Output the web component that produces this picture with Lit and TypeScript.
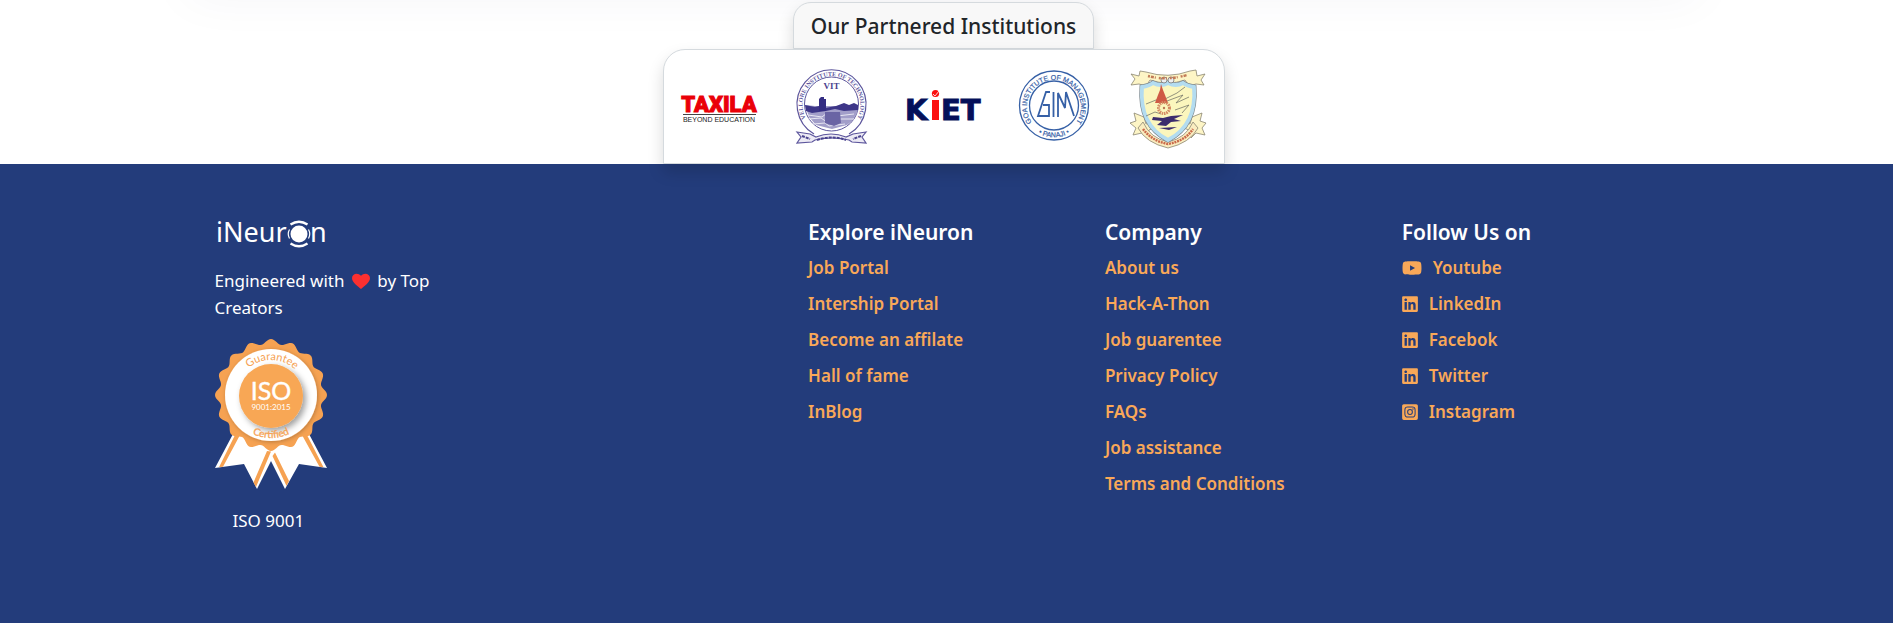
import { LitElement, html, css } from "lit";
import { customElement, property } from "lit/decorators.js";

interface FooterLink {
  label: string;
  icon?: "youtube" | "linkedin" | "instagram";
}

const EXPLORE: FooterLink[] = [
  { label: "Job Portal" },
  { label: "Intership Portal" },
  { label: "Become an affilate" },
  { label: "Hall of fame" },
  { label: "InBlog" },
];

const COMPANY: FooterLink[] = [
  { label: "About us" },
  { label: "Hack-A-Thon" },
  { label: "Job guarentee" },
  { label: "Privacy Policy" },
  { label: "FAQs" },
  { label: "Job assistance" },
  { label: "Terms and Conditions" },
];

const FOLLOW: FooterLink[] = [
  { label: "Youtube", icon: "youtube" },
  { label: "LinkedIn", icon: "linkedin" },
  { label: "Facebok", icon: "linkedin" },
  { label: "Twitter", icon: "linkedin" },
  { label: "Instagram", icon: "instagram" },
];

const icons = {
  youtube: html`<svg width="20" height="18" viewBox="0 0 576 512" aria-hidden="true"><path fill="currentColor" d="M549.655 124.083c-6.281-23.65-24.787-42.276-48.284-48.597C458.781 64 288 64 288 64S117.22 64 74.629 75.486c-23.497 6.322-42.003 24.947-48.284 48.597-11.412 42.867-11.412 132.305-11.412 132.305s0 89.438 11.412 132.305c6.281 23.65 24.787 41.5 48.284 47.821C117.22 448 288 448 288 448s170.78 0 213.371-11.486c23.497-6.321 42.003-24.171 48.284-47.821 11.412-42.867 11.412-132.305 11.412-132.305s0-89.438-11.412-132.305zm-317.51 213.508V175.185l142.739 81.205-142.739 81.201z"/></svg>`,
  linkedin: html`<svg width="16" height="18" viewBox="0 0 448 512" aria-hidden="true"><path fill="currentColor" d="M416 32H31.9C14.3 32 0 46.5 0 64.3v383.4C0 465.5 14.3 480 31.9 480H416c17.6 0 32-14.5 32-32.3V64.3c0-17.8-14.4-32.3-32-32.3zM135.4 416H69V202.2h66.5V416zm-33.2-243c-21.3 0-38.5-17.3-38.5-38.5S80.9 96 102.2 96c21.2 0 38.5 17.3 38.5 38.5 0 21.3-17.2 38.5-38.5 38.5zm282.1 243h-66.4V312c0-24.8-.5-56.7-34.5-56.7-34.6 0-39.9 27-39.9 54.9V416h-66.4V202.2h63.7v29.2h.9c8.9-16.8 30.6-34.5 62.9-34.5 67.2 0 79.7 44.3 79.7 101.9V416z"/></svg>`,
  instagram: html`<svg width="16" height="18" viewBox="0 0 448 512" aria-hidden="true"><path fill="currentColor" d="M224 202.66A53.34 53.34 0 1 0 277.36 256 53.38 53.38 0 0 0 224 202.66zm124.71-41a54 54 0 0 0-30.41-30.41c-21-8.29-71-6.43-94.3-6.43s-73.25-1.93-94.31 6.43a54 54 0 0 0-30.41 30.41c-8.28 21-6.43 71.05-6.43 94.33s-1.85 73.27 6.47 94.34a54 54 0 0 0 30.41 30.41c21 8.29 71 6.43 94.31 6.43s73.24 1.93 94.3-6.43a54 54 0 0 0 30.41-30.41c8.35-21 6.43-71.05 6.43-94.33s1.92-73.26-6.43-94.33zM224 338a82 82 0 1 1 82-82 81.9 81.9 0 0 1-82 82zm85.38-148.3a19.14 19.14 0 1 1 19.13-19.14 19.1 19.1 0 0 1-19.09 19.18zM400 32H48A48 48 0 0 0 0 80v352a48 48 0 0 0 48 48h352a48 48 0 0 0 48-48V80a48 48 0 0 0-48-48zm-17.12 290c-1.29 25.63-7.14 48.34-25.85 67s-41.4 24.63-67 25.85c-26.41 1.49-105.59 1.49-132 0-25.63-1.29-48.26-7.15-67-25.85s-24.63-41.42-25.85-67c-1.49-26.42-1.49-105.61 0-132 1.29-25.63 7.07-48.34 25.85-67s41.47-24.56 67-25.78c26.41-1.49 105.59-1.49 132 0 25.63 1.29 48.33 7.15 67 25.85s24.63 41.42 25.85 67.05c1.49 26.32 1.49 105.44 0 131.88z"/></svg>`,
};

/* Outer edge of the rosette: a ring of rounded scallops. */
function rosette(cx: number, cy: number, r: number, depth: number, lobes: number): string {
  const points: string[] = [];
  for (let i = 0; i < 360; i += 1.5) {
    const a = (i * Math.PI) / 180;
    const wave = (1 + Math.cos(a * lobes)) / 2;
    const rad = r - depth + depth * wave;
    points.push(`${(cx + rad * Math.sin(a)).toFixed(2)} ${(cy - rad * Math.cos(a)).toFixed(2)}`);
  }
  return `M${points.join("L")}Z`;
}

@customElement("partner-logos")
class PartnerLogos extends LitElement {
  static styles = css`
    :host { display: block; }
    .row { display: grid; grid-template-columns: repeat(5, minmax(0, 112px)); justify-items: center; }
    svg { display: block; overflow: visible; }
    text { font-family: "Liberation Sans", Arial, sans-serif; }
    .bold { font-family: "Roboto", sans-serif; font-weight: 900; }
    .heavy { font-family: "DejaVu Sans", sans-serif; font-weight: 700; }
    .serif { font-family: "Liberation Serif", serif; font-weight: 700; }
  `;
  render() {
    return html`<div class="row">
      <svg width="76" height="80" viewBox="0 0 76 80" role="img" aria-label="Taxila">
        <text class="bold" x="37" y="45" text-anchor="middle" font-size="22" fill="#ea0008" stroke="#ea0008" stroke-width="1">TAXILA</text>
        <path d="M1 47.5H74" stroke="#444" stroke-width="1"/>
        <text x="37" y="55" text-anchor="middle" font-size="7" fill="#222">BEYOND EDUCATION</text>
      </svg>
      <svg width="72" height="80" viewBox="0 0 72 80" role="img" aria-label="Vellore Institute of Technology">
        <defs><path id="vit" d="M14 57.500A29 29 0 1 1 57 57.500"/></defs>
        <g fill="none" stroke="#5c559c">
          <path d="M18 67A34.500 34.500 0 1 1 53 67" stroke-width="1.200"/>
          <circle cx="35.500" cy="37" r="27" stroke-width="1"/>
        </g>
        <text class="serif" font-size="6" fill="#5c559c"><textPath href="#vit" startOffset="50%" text-anchor="middle">VELLORE INSTITUTE OF TECHNOLOGY</textPath></text>
        <text class="serif" x="35.500" y="22" text-anchor="middle" font-size="9" fill="#4a438f">VIT</text>
        <path d="M9 38l10 1h36l7-1-1 8-5 8-5 4-15 4-16-4-7-8z" fill="#a29ec9"/>
        <path d="M9 38l10 2 4-1 6 2 11-2 8-3 5 2 5-2 4 2v5l-14 1-9-2-9 2-14 2-6-2z" fill="#3d3688"/>
        <path d="M23 41V32l2-2h3v2h2v12h-7z" fill="#342d83"/>
        <path d="M12 48l14 2 5-4 10 3 17-2M12 52l13-1 6 4 14-3 13 0M17 57l12-1 4 3 16-2" fill="none" stroke="#e7e6f2" stroke-width="1"/>
        <path d="M29 45h15l1 11-7 3-9-3z" fill="#6a64a4"/>
        <path d="M1 65l13 2 6 3q15-6 30 0l7-3 13-2-4 5 4 6-14-1-3-2q-17-4-34 0l-3 2-15 1 4-6z" fill="#eceaf4" stroke="#5c559c" stroke-width="1.200"/>
        <path d="M21 73q14-5 29 0M6 69l8 3M65 69l-8 3" fill="none" stroke="#4a438f" stroke-width="2" stroke-dasharray="3 1"/>
      </svg>
      <svg width="80" height="80" viewBox="0 0 80 80" role="img" aria-label="KIET">
        <text class="heavy" x="1" y="53" font-size="29" fill="#04105a" stroke="#04105a" stroke-width="1">K</text>
        <path d="M28 33h7v20h-7z" fill="#fb0f0f"/><circle cx="31.500" cy="26.500" r="3.600" fill="#fb0f0f"/>
        <path d="M29 27l2 2 4-5" fill="none" stroke="#fff" stroke-width=".8"/>
        <text class="heavy" x="37" y="53" font-size="29" fill="#04105a" stroke="#04105a" stroke-width="1">ET</text>
      </svg>
      <svg width="72" height="80" viewBox="0 0 72 80" role="img" aria-label="Goa Institute of Management, Panaji">
        <defs><path id="gimTop" d="M14.500 58.500A27 27 0 1 1 53.500 58.500"/><path id="gimBottom" d="M8 57A32 32 0 0 0 60 57"/></defs>
        <g fill="none" stroke="#3660a6"><circle cx="34" cy="38.500" r="34.500" stroke-width="1.300"/><circle cx="34" cy="38.500" r="24.500" stroke-width="1.300"/>
        <path d="M30 25h-4l-8 24h11V38h-6M33.500 25v25M38 50V26l7 15 1-16 8 24" stroke-width="1.800"/></g>
        <text font-size="7" fill="#3660a6" stroke="#3660a6" stroke-width=".2"><textPath href="#gimTop" startOffset="50%" text-anchor="middle">GOA INSTITUTE OF MANAGEMENT</textPath></text>
        <text font-size="7" fill="#3660a6" stroke="#3660a6" stroke-width=".2"><textPath href="#gimBottom" startOffset="50%" text-anchor="middle">• PANAJI •</textPath></text>
      </svg>
      <svg width="74" height="80" viewBox="0 0 74 80" role="img" aria-label="College crest">
        <g stroke="#8b8672" stroke-width=".8" fill="#fdf5c6">
          <path d="M3 46l10 4 2 7 8-3 3 6-8 3-2 8-5-5-9 2 3-7-6-5 6-2zM71 46l-10 4-2 7-6-3-3 6 8 3 2 8 5-5 9 2-3-7 4-5-6-2z"/>
          <path d="M12 55q7 16 25 20 18-4 25-20l5 6q-8 15-30 20-22-5-30-20z" fill="#faedc0"/>
          <path d="M0 7l8 2 1-5 6 1q22 7 44-1l6-1 1 6 8-2-4 6 3 5-8-1-7 2-4-6q-17 6-35 0l-4 6-7-2-8 1 4-6z"/>
        </g>
        <path d="M11 20q7-1 11-4 8 4 15 0 8 4 15 0 4 3 11 4 3 38-26 53Q8 58 11 20z" fill="#fbf6bd" stroke="#7b858a" stroke-width="5"/>
        <path d="M11 20q7-1 11-4 8 4 15 0 8 4 15 0 4 3 11 4 3 38-26 53Q8 58 11 20z" fill="#fbf6bd" stroke="#b3dcf0" stroke-width="3.800"/>
        <circle cx="33" cy="13" r="3" fill="#eee" stroke="#777" stroke-width=".8"/><circle cx="40" cy="13" r="3" fill="#eee" stroke="#777" stroke-width=".8"/>
        <path d="M15 37l10-4 9-1 12-6 8-6M36 34l16-6-7 8 13-6M15 49l9-4 6 2M44 43l14-5-7 8" fill="none" stroke="#77796b" stroke-width=".8"/>
        <path d="M30 17l2 6 2 5 3 8H24l3-8 2-5z" fill="#cf5a44"/>
        <circle cx="33" cy="41" r="5.500" fill="none" stroke="#d48a63" stroke-width="3" stroke-dasharray="1.500 .8"/>
        <circle cx="33" cy="41" r="1.200" fill="#b75"/>
        <path d="M22 50l10 1 8-2 12-1-9 4 7 2-10 1-5 4-9-1 5-4-10-1zM28 61l18-1-8 3z" fill="#3c2c6d"/>
        <path d="M17 9q18 5 39-1" fill="none" stroke="#c27b58" stroke-width="2.500" stroke-dasharray="2 1 3 1 1 3"/>
        <path d="M12 62q9 12 25 15 17-3 25-15" fill="none" stroke="#c96a4a" stroke-width="2.500" stroke-dasharray="2 .8"/>
      </svg>
    </div>`;
  }
}

@customElement("iso-badge")
class IsoBadge extends LitElement {
  static styles = css`
    :host { display: block; }
    svg { display: block; }
    text { font-family: "Lato", sans-serif; text-anchor: middle; }
  `;
  render() {
    return html`<svg width="112" height="151" viewBox="0 0 112 151" role="img" aria-label="ISO 9001:2015 guarantee certified">
      <defs>
        <filter id="soft" x="-30%" y="-30%" width="170%" height="170%"><feDropShadow dx="3" dy="3" stdDeviation="3" flood-color="#000" flood-opacity=".38"/></filter>
        <filter id="faint" x="-30%" y="-30%" width="170%" height="170%"><feDropShadow dx="1" dy="1" stdDeviation="2" flood-color="#000" flood-opacity=".25"/></filter>
        <path id="arcTop" d="M21 56A35 35 0 0 1 91 56"/>
        <path id="arcBottom" d="M13 56A43 43 0 0 0 99 56"/>
      </defs>
      <path d="M18 95L0 129l29-4 13 25 14-28 14 28 14-25 28 4-18-34z" fill="#fff"/>
      <path d="M19.500 97L4 128.300l4-.5L25 96zM92.500 97l16 31.300-4-.5L87 96zM52 112l4 .5-15 35.500-2.500-4.500zM57.500 117l2.500-3.500 14 28.500-2.500 5z" fill="#f6a252"/>
      <path d=${rosette(56, 56, 56, 5, 16)} fill="#f6a252"/>
      <circle cx="56" cy="56" r="46" fill="#fff" filter="url(#faint)"/>
      <circle cx="56" cy="57" r="32" fill="#f8a755" filter="url(#soft)"/>
      <text x="56" y="61" font-size="25" fill="#fff" stroke="#fff" stroke-width=".4">ISO</text>
      <text x="56" y="71" font-size="8" fill="#fff">9001:2015</text>
      <text font-size="11" fill="#f6a252"><textPath href="#arcTop" startOffset="51%">Guarantee</textPath></text>
      <text font-size="10" fill="#f6a252" stroke="#f6a252" stroke-width=".3"><textPath href="#arcBottom" startOffset="50%">Certified</textPath></text>
    </svg>`;
  }
}

@customElement("footer-links")
class FooterLinks extends LitElement {
  @property() heading = "";
  @property({ attribute: false }) links: FooterLink[] = [];
  static styles = css`
    :host { display: block; }
    h4 { margin: 0 0 8px; font-size: 21px; line-height: 28px; font-weight: 600; color: #fff; }
    ul { display: grid; gap: 8px; justify-items: start; list-style: none; margin: 0; padding: 0; }
    a { display: flex; align-items: center; gap: 11px; color: #f9a858; text-decoration: none; font-size: 17px; line-height: 28px; font-weight: 600; white-space: nowrap; }
  `;
  render() {
    return html`<h4>${this.heading}</h4>
      <ul>${this.links.map((l) => html`<li><a href="#">${l.icon ? icons[l.icon] : ""}<span>${l.label}</span></a></li>`)}</ul>`;
  }
}

@customElement("app-root")
class AppRoot extends LitElement {
  static styles = css`
    :host { display: flex; flex-direction: column; min-height: 100vh; background: #fff; font-family: "Noto Sans", sans-serif; color: #fff; }
    .partners { position: relative; z-index: 1; display: flex; flex-direction: column; align-items: center; padding-right: 6px; color: #212529; }
    .shade { width: 78%; height: 0; margin-bottom: 2px; box-shadow: 0 -24px 50px 20px rgba(30, 40, 90, 0.05); }
    .tab, .card { box-sizing: border-box; border: 1px solid #d5dade; box-shadow: 0 8px 16px rgba(0, 0, 0, 0.15); }
    .tab { margin: 0; padding: 9px 17px 7px; border-radius: 18px 18px 0 0; background: #f8f8f8; font-size: 21px; line-height: 29px; font-weight: 500; }
    .card { padding: 17px 0 16px; border-radius: 22px 22px 0 0; background: #fff; }
    footer { flex: 1; padding: 54px 24px; background: #233c7b; }
    .columns { display: grid; grid-template-columns: 2fr 1fr 1fr 1fr; max-width: 1484px; margin: 0 auto; }
    .columns > * { padding-left: 10px; }
    .about { max-width: 250px; }
    .wordmark { display: block; overflow: visible; }
    .wordmark text { font-family: "Noto Sans", sans-serif; font-size: 27px; fill: #fff; }
    p { margin: 0; font-size: 17px; line-height: 27px; }
    .made { margin-top: 17px; }
    .heart { margin: 0 3px; vertical-align: -3px; }
    iso-badge { margin-top: 18px; }
    .caption { margin-top: 17px; padding-left: 18px; }
  `;
  render() {
    return html`
      <section class="partners">
        <div class="shade"></div>
        <h4 class="tab">Our Partnered Institutions</h4>
        <div class="card"><partner-logos></partner-logos></div>
      </section>
      <footer>
        <div class="columns">
          <div class="about">
            <svg class="wordmark" width="112" height="32" viewBox="0 0 112 32" role="img" aria-label="iNeuron">
              <text x="1" y="24">iNeur</text>
              <text x="95" y="24">n</text>
              <circle cx="84" cy="16" r="8.500" fill="#fff"/>
              <path d="M75.500 6.500Q84 1 92.500 6.500M75.500 25.500Q84 31 92.500 25.500" fill="none" stroke="#fff" stroke-width="2.400"/>
              <path d="M74.500 11.500Q72 16 74.500 20.500M93.500 11.500Q96 16 93.500 20.500" fill="none" stroke="#fff" stroke-width="1.200"/>
            </svg>
            <p class="made">Engineered with <svg class="heart" width="18" height="18" viewBox="0 0 18 18" role="img" aria-label="love"><path d="M9 17C6 14.500 0 10.500 0 6 0 1.500 6 0 9 3.800 12 0 18 1.500 18 6c0 4.500-6 8.500-9 11z" fill="#fb3030"/></svg> by Top Creators</p>
            <iso-badge></iso-badge>
            <p class="caption">ISO 9001</p>
          </div>
          <footer-links .heading=${"Explore iNeuron"} .links=${EXPLORE}></footer-links>
          <footer-links .heading=${"Company"} .links=${COMPANY}></footer-links>
          <footer-links .heading=${"Follow Us on"} .links=${FOLLOW}></footer-links>
        </div>
      </footer>`;
  }
}
